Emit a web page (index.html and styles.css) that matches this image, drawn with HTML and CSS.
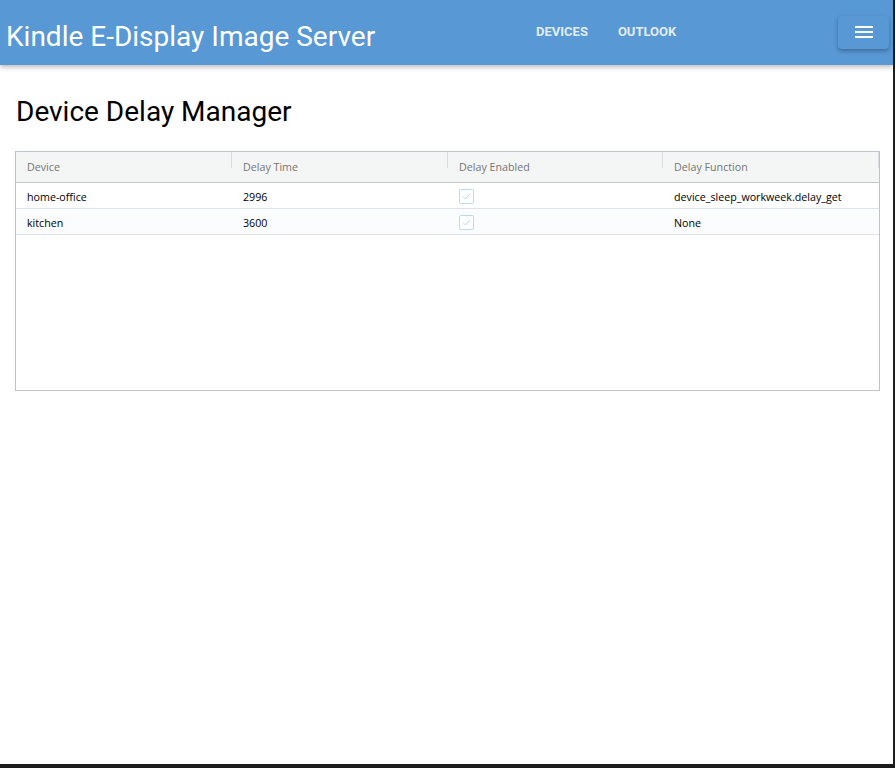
FILE: index.html
```html
<!DOCTYPE html>
<html>
<head>
<meta charset="utf-8">
<link rel="stylesheet" href="styles.css">
</head>
<body>
<div class="screen">
  <header class="navbar">
    <div class="brand">Kindle E-Display Image Server</div>
    <nav class="links">
      <a class="link">DEVICES</a>
      <a class="link">OUTLOOK</a>
    </nav>
    <button class="menu-btn" aria-label="menu">
      <svg width="18" height="14" viewBox="0 0 18 14"><rect x="0" y="1" width="18" height="2" fill="#fff"/><rect x="0" y="6" width="18" height="2" fill="#fff"/><rect x="0" y="11" width="18" height="2" fill="#fff"/></svg>
    </button>
  </header>
  <main class="content">
    <h1 class="title">Device Delay Manager</h1>
    <div class="grid">
      <div class="row head">
        <div class="cell">Device</div>
        <div class="cell">Delay Time</div>
        <div class="cell">Delay Enabled</div>
        <div class="cell">Delay Function</div>
      </div>
      <div class="row">
        <div class="cell">home-office</div>
        <div class="cell">2996</div>
        <div class="cell"><span class="check"><svg width="9" height="7" viewBox="0 0 9 7"><path d="M1 3.5 L3.5 6 L8 1" fill="none" stroke="#b8d8f0" stroke-width="1"/></svg></span></div>
        <div class="cell">device_sleep_workweek.delay_get</div>
      </div>
      <div class="row alt">
        <div class="cell">kitchen</div>
        <div class="cell">3600</div>
        <div class="cell"><span class="check"><svg width="9" height="7" viewBox="0 0 9 7"><path d="M1 3.5 L3.5 6 L8 1" fill="none" stroke="#b8d8f0" stroke-width="1"/></svg></span></div>
        <div class="cell">None</div>
      </div>
    </div>
  </main>
</div>
</body>
</html>
```
FILE: styles.css
```css
html, body {
  margin: 0;
  padding: 0;
  background: #1c1c1c;
  height: 768px;
  overflow: hidden;
}
.screen {
  width: 893px;
  height: 764px;
  background: #fff;
  overflow: hidden;
}
.navbar {
  height: 65px;
  background: #5898d5;
  box-shadow: 0 2px 5px rgba(0, 0, 0, 0.28);
  display: flex;
  align-items: center;
  position: relative;
  z-index: 1;
}
.brand {
  font-family: Roboto, sans-serif;
  font-size: 28px;
  color: #fff;
  padding-left: 6px;
  margin-top: 7px;
  width: 530px;
}
.links {
  display: flex;
  gap: 30px;
  margin-top: -3px;
}
.link {
  font-family: Roboto, sans-serif;
  font-weight: 700;
  font-size: 13px;
  color: #e2ecf8;
}
.menu-btn {
  margin-left: auto;
  margin-right: 4px;
  margin-top: -1px;
  width: 51px;
  height: 33px;
  background: #5898d5;
  border: none;
  border-radius: 4px;
  box-shadow: 0 2px 4px rgba(0, 0, 0, 0.3);
  display: flex;
  align-items: center;
  justify-content: center;
  padding: 0;
}
.content {
  padding: 0 14px 0 15px;
}
.title {
  font-family: Roboto, sans-serif;
  font-weight: 400;
  font-size: 28px;
  color: #000;
  margin: 29px 0 0 1px;
  line-height: 36px;
  height: 57px;
}
.grid {
  border: 1px solid #bdc3c7;
  height: 238px;
  width: 863px;
  font-family: "Open Sans", sans-serif;
  font-size: 10.7px;
}
.row {
  display: grid;
  grid-template-columns: 216px 216px 215px 216px;
  height: 25px;
  border-bottom: 1px solid #dde2e6;
  align-items: center;
  background: #fff;
  color: #000;
}
.row .cell {
  padding-top: 2px;
}
.row.alt {
  background: #fbfcfd;
}
.row.head {
  height: 30px;
  background: #f4f5f5;
  color: #757575;
  border-bottom: 1px solid #c4c9cc;
}
.row.head .cell {
  padding-top: 0;
}
.cell {
  padding-left: 11px;
  position: relative;
  white-space: nowrap;
}
.head .cell::after {
  content: "";
  position: absolute;
  right: 0;
  top: -8px;
  height: 16px;
  border-right: 1px solid #d9dcde;
}
.check {
  display: inline-flex;
  width: 13px;
  height: 13px;
  border: 1px solid #b9daf3;
  border-radius: 2px;
  align-items: center;
  justify-content: center;
  vertical-align: middle;
  background: #fff;
  margin-top: -2px;
}
```
